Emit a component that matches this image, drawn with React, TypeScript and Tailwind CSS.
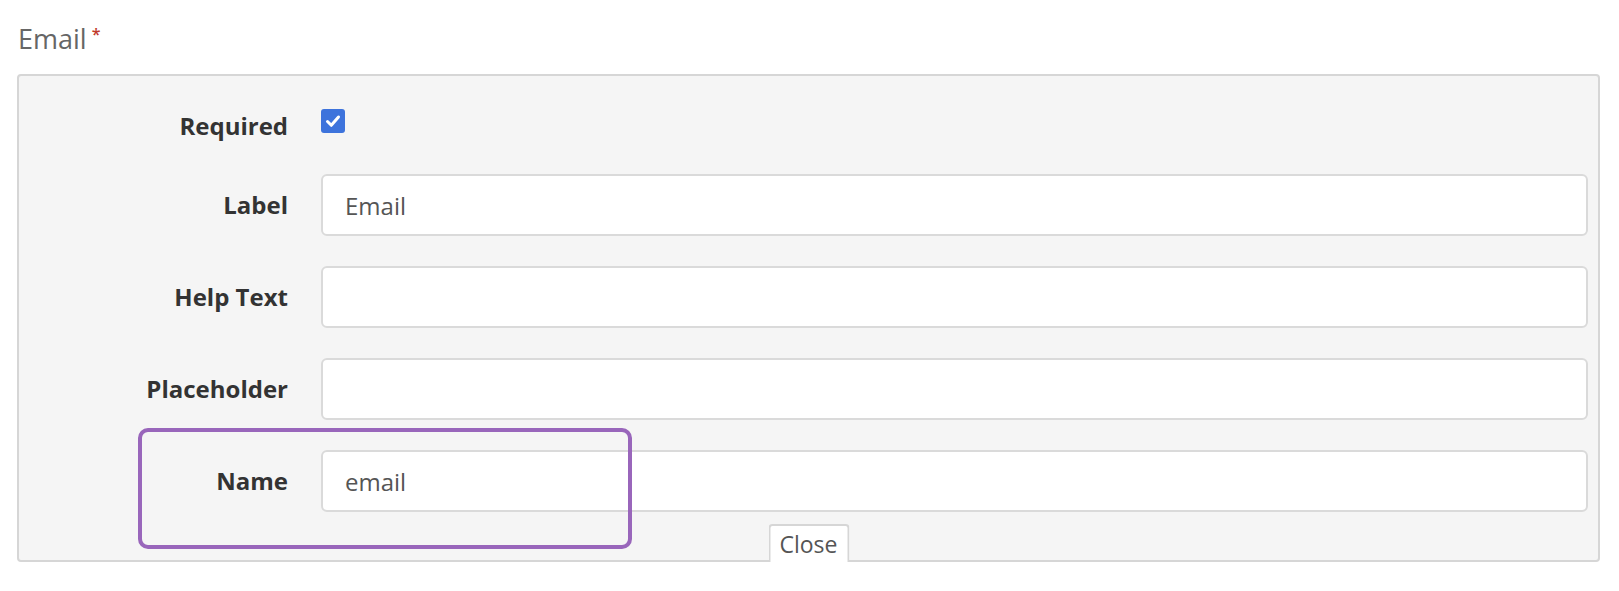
const font = { fontFamily: '"Open Sans", "Noto Sans", sans-serif' };

const labelClass = "text-right text-[24px] leading-[34px] font-bold text-[#333333]";
const inputClass =
  "h-[62px] w-full rounded-[6px] border-2 border-[#dadada] bg-white pl-[22px] text-[24px] text-[#555555] outline-none";

function Row({ label, value }: { label: string; value?: string }) {
  return (
    <div className="grid grid-cols-[269px_1fr] items-center gap-x-[33px]">
      <div className={labelClass}>{label}</div>
      <input className={inputClass} style={font} defaultValue={value ?? ""} />
    </div>
  );
}

export default function App() {
  return (
    <div className="relative min-h-[591px] bg-white pl-[17px] pr-[19px] pt-[22px]" style={font}>
      <div className="flex items-start pl-[1px] text-[27px] leading-[34px] text-[#666666]">
        <span>Email</span>
        <span className="ml-[5px] mt-[4px] text-[16px] font-semibold leading-[16px] text-[#c0392b]">*</span>
      </div>

      <div className="relative mt-[18px] rounded-[4px] border-2 border-[#d6d6d6] bg-[#f5f5f5] pb-[48px] pr-[10px] pt-[33px]">
        <div className="grid grid-cols-[269px_1fr] items-start gap-x-[33px]">
          <div className={labelClass}>Required</div>
          <div className="flex h-[24px] w-[24px] items-center justify-center rounded-[3px] bg-[#3d73dc]">
            <svg width="20" height="20" viewBox="0 0 20 20" fill="none">
              <path d="M4.5 10.5l3.8 3.8L15.5 6" stroke="white" strokeWidth="3" strokeLinecap="round" strokeLinejoin="round" />
            </svg>
          </div>
        </div>

        <div className="mt-[31px] flex flex-col gap-[30px]">
          <Row label="Label" value="Email" />
          <Row label="Help Text" />
          <Row label="Placeholder" />
          <Row label="Name" value="email" />
        </div>

        <div className="absolute bottom-[-2px] left-1/2 flex h-[38px] w-[81px] -translate-x-1/2 items-center justify-center rounded-t-[4px] border-2 border-b-0 border-[#d6d6d6] bg-white text-[23px] text-[#555555]">
          Close
        </div>
      </div>

      <div className="absolute left-[138px] top-[428px] h-[121px] w-[494px] rounded-[10px] border-4 border-[#9966bb]" />
    </div>
  );
}
